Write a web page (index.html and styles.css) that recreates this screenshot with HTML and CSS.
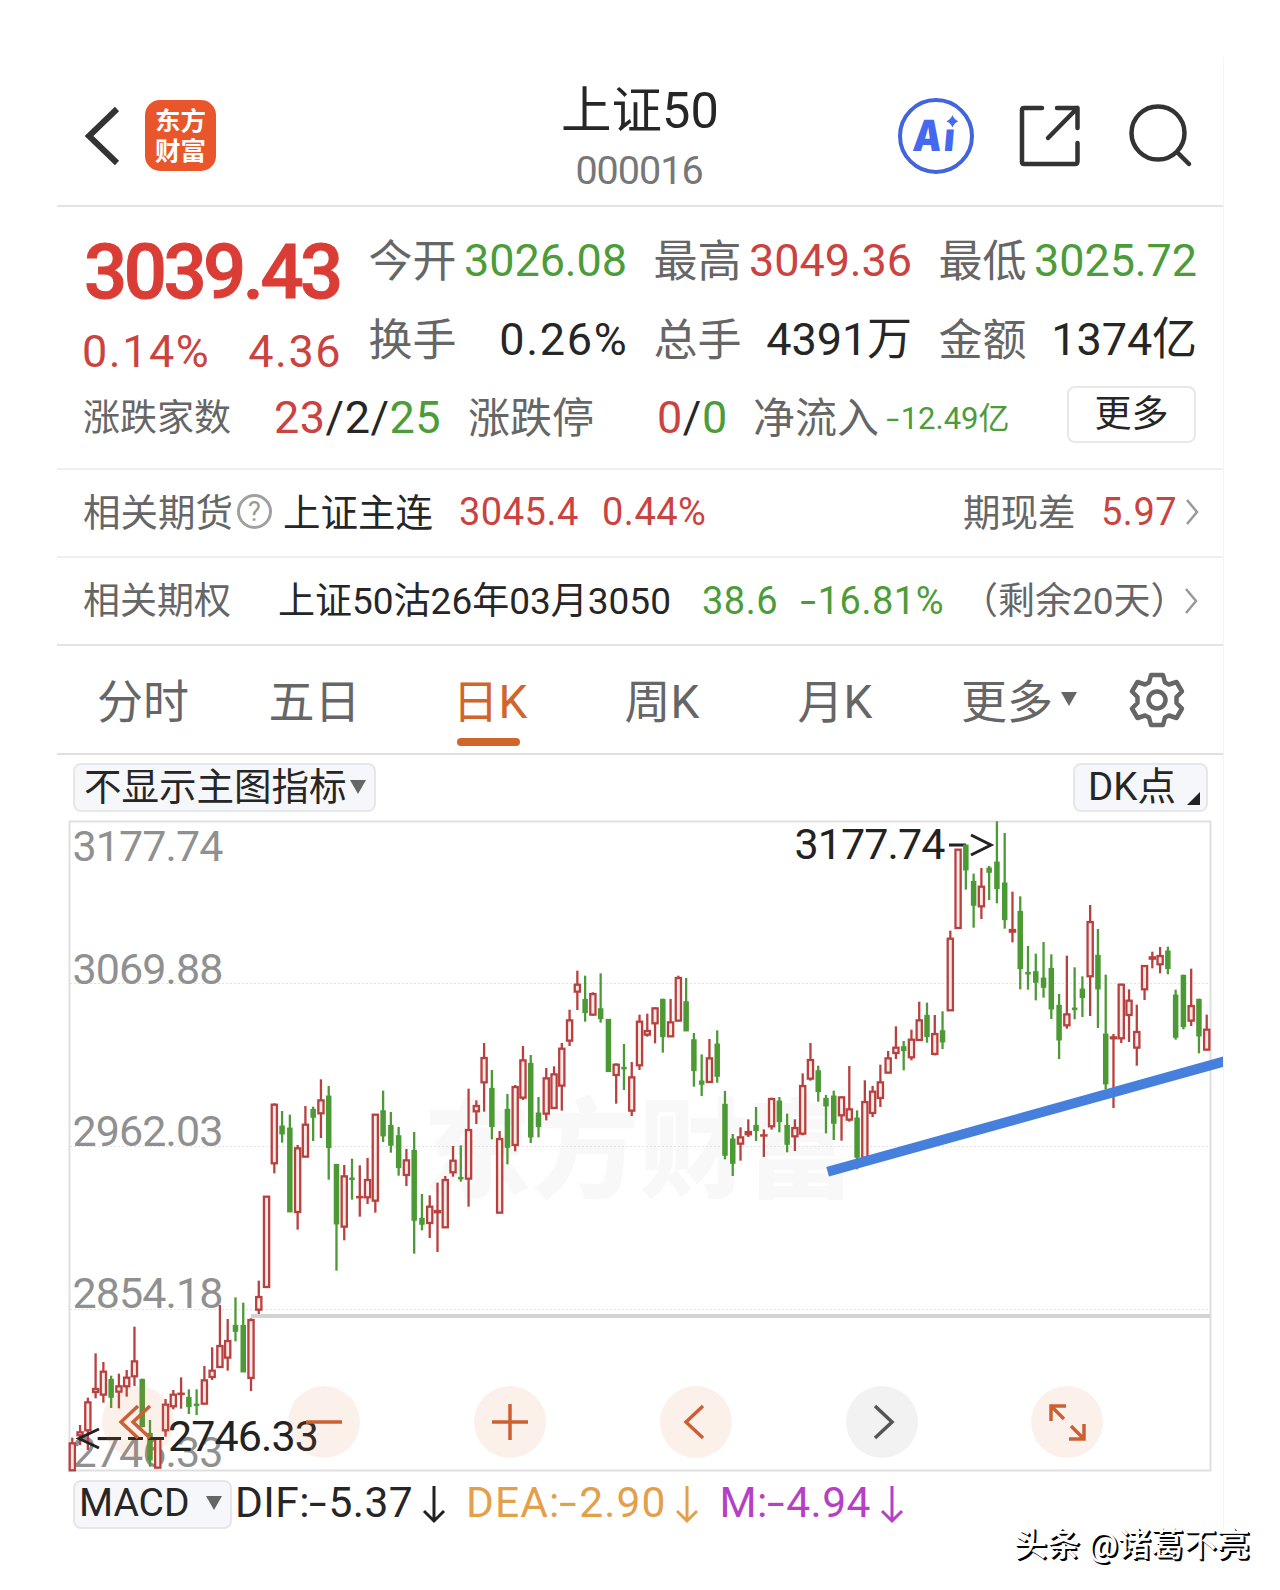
FILE: index.html
```html
<!DOCTYPE html>
<html lang="zh-CN">
<head>
<meta charset="utf-8">
<title>上证50 000016</title>
<link rel="stylesheet" href="styles.css">
</head>
<body>
<main class="app">
  <header class="topbar">
    <div class="topbar-left">
      <svg class="back" width="36" height="64" viewBox="0 0 36 64"><path d="M33 5 5 32 33 59" fill="none" stroke="#333" stroke-width="6"/></svg>
      <div class="logo"><span>东方</span><span>财富</span></div>
    </div>
    <div class="title">
      <h1>上证50</h1>
      <p>000016</p>
    </div>
    <div class="topbar-right">
      <svg width="78" height="78" viewBox="0 0 78 78">
        <clipPath id="below-dot"><path d="M0 0H45V32.500H78V78H0Z"/></clipPath>
        <circle cx="39" cy="39" r="36" fill="none" stroke="#4365dc" stroke-width="4"/>
        <g clip-path="url(#below-dot)"><text class="ai" transform="translate(15 53.500) skewX(-5) scale(.84 1)"><tspan x="0">A</tspan><tspan x="37">i</tspan></text></g>
        <path d="M55.400 18 Q57 22.500 61.500 24.300 Q57 26 55.400 30.500 Q54 26 49.300 24.300 Q54 22.500 55.400 18Z" fill="#4468ee"/>
      </svg>
      <svg class="share" width="64" height="64" viewBox="0 0 64 64" fill="none" stroke="#333" stroke-width="4.500" stroke-linecap="round" stroke-linejoin="round"><path d="M24 4H6Q4 4 4 6V58Q4 60 6 60H57Q59.500 60 59.500 57V39M39 4H59.500V24M59.500 4 30 34"/></svg>
      <svg class="search" width="68" height="68" viewBox="0 0 68 68" fill="none" stroke="#333" stroke-width="4.500" stroke-linecap="round"><circle cx="31" cy="31" r="26.500"/><path d="M50 50 62 62"/></svg>
    </div>
  </header>

  <section class="quote">
    <div class="quote-main">
      <div class="price">
        <strong>3039.43</strong>
        <div class="change"><span>0.14%</span><span>4.36</span></div>
      </div>
      <dl class="stats">
        <div><dt>今开</dt><dd class="down">3026.08</dd></div>
        <div><dt>最高</dt><dd class="up">3049.36</dd></div>
        <div><dt>最低</dt><dd class="down">3025.72</dd></div>
        <div><dt>换手</dt><dd class="turnover">0.26%</dd></div>
        <div><dt>总手</dt><dd>4391万</dd></div>
        <div><dt>金额</dt><dd>1374亿</dd></div>
      </dl>
    </div>
    <div class="breadth">
      <span class="label small">涨跌家数</span>
      <span class="num"><b class="up">23</b>/2/<b class="down">25</b></span>
      <span class="label">涨跌停</span>
      <span class="num"><b class="up">0</b>/<b class="down">0</b></span>
      <span class="label">净流入</span>
      <span class="flow down"><i class="minus">-</i>12.49亿</span>
      <button class="more">更多</button>
    </div>
  </section>

  <section class="related futures">
    <span class="label">相关期货</span>
    <span class="help">?</span>
    <span class="name">上证主连</span>
    <span class="up">3045.4</span>
    <span class="up">0.44%</span>
    <span class="label">期现差</span>
    <span class="up">5.97</span>
    <svg class="chev" width="14" height="28" viewBox="0 0 14 28"><path d="M2 2 12 14 2 26" fill="none" stroke="#999" stroke-width="2.500"/></svg>
  </section>
  <section class="related options">
    <span class="label">相关期权</span>
    <span class="name">上证50沽26年03月3050</span>
    <span class="down">38.6</span>
    <span class="down"><i class="minus">-</i>16.81%</span>
    <span class="label days">（剩余20天）</span>
    <svg class="chev" width="14" height="28" viewBox="0 0 14 28"><path d="M2 2 12 14 2 26" fill="none" stroke="#999" stroke-width="2.500"/></svg>
  </section>

  <nav class="tabs">
    <span>分时</span><span>五日</span><span class="active">日K</span><span>周K</span><span>月K</span>
    <span class="tab-more">更多<i class="tri"></i></span>
    <svg width="56" height="56" viewBox="-28 -28 56 56" fill="none" stroke="#666" stroke-width="4.500" stroke-linejoin="round"><path d="M-6-25H6L8-17.500 12-15.500 19.500-18 25-8.500 19.500-3V3L25 8.500 19.500 18 12 15.500 8 17.500 6 25H-6L-8 17.500-12 15.500-19.500 18-25 8.500-19.500 3V-3L-25-8.500-19.500-18-12-15.500-8-17.500Z"/><circle r="8.500"/></svg>
  </nav>

  <div class="indicator">
    <button class="chip">不显示主图指标<i class="tri"></i></button>
    <button class="chip dk">DK点<i class="corner"></i></button>
  </div>

  <section class="chart">
    <svg id="kline" width="1166" height="660" viewBox="57 816 1166 660">
      <text class="brand" x="423" y="1189">东方财富</text>
      <g class="grid"><path d="M70 983.500H1210M70 1146.500H1210M70 1309.500H1210"/></g>
      <rect class="frame" x="69.500" y="821.500" width="1141" height="649"/>
      <path class="ref-line" d="M251 1316H1210"/>
      <g class="axis">
        <text x="72.500" y="861">3177.74</text>
        <text x="72.500" y="984">3069.88</text>
        <text x="72.500" y="1146">2962.03</text>
        <text x="72.500" y="1308">2854.18</text>
        <text x="72.500" y="1467">2746.33</text>
      </g>
      <g class="mark">
        <text x="794.500" y="859">3177.74</text>
        <path d="M949 845H966M971 835 991 845 971 855"/>
      </g>
      <g id="candles"></g>
      <g class="mark">
        <text x="168" y="1451">2746.33</text>
        <path d="M99 1429 79 1438.500 99 1448M98 1438.500H121M128 1438.500H143M148 1438.500H164"/>
      </g>
      <path class="trend" d="M827.600 1171.800 1228 1060.400"/>
    </svg>
    <div class="controls">
      <span><svg viewBox="-36 -36 72 72"><path d="M0-16-17 0 0 16M12-16-5 0 12 16"/></svg></span>
      <span><svg viewBox="-36 -36 72 72"><path d="M-18 0H18"/></svg></span>
      <span><svg viewBox="-36 -36 72 72"><path d="M-18 0H18M0-18V18"/></svg></span>
      <span><svg viewBox="-36 -36 72 72"><path d="M7-16-10 0 7 16"/></svg></span>
      <span class="off"><svg viewBox="-36 -36 72 72"><path d="M-7-16 10 0-7 16"/></svg></span>
      <span><svg viewBox="-36 -36 72 72"><path d="M-16-1V-16H-1M-16-16-3-3M17 2V17H2M17 17 4 4"/></svg></span>
    </div>
  </section>

  <footer class="macd">
    <button class="chip">MACD<i class="tri"></i></button>
    <span>DIF:<i class="minus">-</i>5.37</span><svg width="24" height="40" viewBox="0 0 24 40"><path d="M12 2V37M2 27 12 37 22 27"/></svg>
    <span class="dea">DEA:<i class="minus">-</i>2.90</span><svg class="dea" width="24" height="40" viewBox="0 0 24 40"><path d="M12 2V37M2 27 12 37 22 27"/></svg>
    <span class="m">M:<i class="minus">-</i>4.94</span><svg class="m" width="24" height="40" viewBox="0 0 24 40"><path d="M12 2V37M2 27 12 37 22 27"/></svg>
  </footer>
</main>
<p class="credit">头条 @诸葛不亮</p>
<script src="chart.js"></script>
</body>
</html>
```
FILE: styles.css
```css
* { box-sizing: border-box; margin: 0; padding: 0; }
body {
  width: 1280px;
  height: 1590px;
  padding-top: 57px;
  overflow: hidden;
  background: #fff;
  color: #262626;
  font-family: Roboto, "Noto Sans CJK SC", sans-serif;
}
i { font-style: normal; }
b { font-weight: 400; }
button { font: inherit; color: inherit; background: none; }
svg { display: block; flex: none; }
.app { width: 1167px; height: 1472px; margin-left: 57px; border-right: 1px solid #f4f4f4; white-space: nowrap; }
.up { color: #cb4340; }
.down { color: #4c9c39; }
.label { color: #666; }
.minus { display: inline-block; width: .44em; transform: scaleX(1.5); transform-origin: 10% 50%; }
.tri { display: inline-block; border: 8px solid transparent; border-top: 14px solid #666; border-bottom: 0; }

.topbar { display: grid; grid-template-columns: 400px 366px 400px; height: 150px; border-bottom: 2px solid #e3e3e3; }
.topbar-left { display: flex; align-items: center; padding: 9px 0 0 27px; }
.logo {
  display: flex; flex-direction: column; align-items: center; justify-content: center;
  width: 71px; height: 71px; margin-left: 25px; border-radius: 15px;
  background: #e9562b; color: #fff; font-weight: 700; font-size: 25.500px; line-height: 30px;
}
.title { text-align: center; padding-top: 24px; }
.title h1 { font-size: 50.500px; font-weight: 400; line-height: 60px; }
.title p { font-size: 39.500px; line-height: 60px; letter-spacing: -1px; color: #777; padding-right: 2px; }
.topbar-right { display: flex; align-items: center; padding: 9px 0 0 74px; }
.ai { font: 900 43px Inter, sans-serif; fill: #4468ee; }
.share { margin-left: 43px; }
.search { margin-left: 44.500px; }

.quote { height: 263px; border-bottom: 2px solid #f0f0f0; }
.quote-main { display: flex; height: 171px; padding: 13px 26px 0 27px; }
.price { width: 285px; color: #d93d35; }
.price strong { display: block; font-size: 76px; line-height: 104px; font-weight: 500; letter-spacing: -3.500px; -webkit-text-stroke: 1px #d93d35; }
.change { display: flex; justify-content: space-between; width: 260px; margin-left: -2px; line-height: 56px; font-size: 45px; letter-spacing: 1.500px; color: #cb4340; }
.stats { display: grid; grid-template-columns: repeat(3, 258.500px); grid-auto-rows: 78.500px; column-gap: 26.500px; font-size: 45px; line-height: 80px; }
.stats div { display: flex; justify-content: space-between; }
.stats dt { color: #666; font-size: 44px; padding-top: 2px; }
.stats dd { letter-spacing: -.1px; padding-top: 1px; }
.stats .turnover { letter-spacing: 1.700px; margin-right: -1.500px; }
.breadth { display: grid; grid-template-columns: 191px 194px 189px 96px 134px 180px 129px; align-items: center; height: 76px; padding: 2px 0 0 26px; font-size: 45px; }
.breadth .label { font-size: 42px; margin-top: -5px; }
.breadth .label.small { font-size: 37px; }
.breadth .num { letter-spacing: .5px; }
.flow { font-size: 31px; margin-top: -3px; }
.more { height: 57px; margin-top: -5px; border: 2px solid #e8e8e8; border-radius: 8px; font-size: 37px; line-height: 52px; }

.related { display: grid; align-items: center; height: 88px; padding-left: 26px; font-size: 37.500px; border-bottom: 2px solid #f0f0f0; }
.related .up, .related .down { letter-spacing: .5px; }
.related .label, .related .name { margin-top: -5px; }
.futures { grid-template-columns: 154px 46px 176px 143px 361px 138px 84px 14px; padding-bottom: 3px; }
.futures .up { font-size: 38px; }
.options { grid-template-columns: 195px 424px 99px 160px 223px 14px; font-size: 37px; border-color: #e3e3e3; padding-bottom: 1px; }
.options .down { font-size: 38px; }
.help { width: 35px; height: 35px; border: 3px solid #a0a0a0; border-radius: 50%; color: #999; font-size: 27px; line-height: 30px; text-align: center; }

.tabs { display: grid; grid-template-columns: 172px 171px 180px 164px 182px 203px 56px; align-items: center; height: 109px; border-bottom: 2px solid #e0e0e0; color: #666; font-size: 46px; text-align: center; }
.tabs span { margin-top: -4px; }
.tabs .active { position: relative; color: #d0662c; }
.tabs .active::after { content: ""; position: absolute; left: 57px; top: 73px; width: 63px; height: 8px; border-radius: 4px; background: #d0662c; }
.tabs .tab-more { display: flex; align-items: center; padding-left: 35px; }
.tab-more .tri { margin-left: 8px; margin-top: 3px; }

.indicator { display: flex; justify-content: space-between; height: 61px; padding: 8px 15px 0 16px; }
.chip { display: flex; align-items: center; height: 49px; padding: 0 8px 1px 9px; border: 2px solid #e6e7ea; border-radius: 8px; background: #f6f7fa; font-size: 37.500px; line-height: 44px; }
.chip .tri { margin-left: 3px; }
.chip.dk { position: relative; width: 135px; padding-left: 13px; font-size: 38.500px; }
.corner { position: absolute; right: 6px; bottom: 5px; border-left: 13px solid transparent; border-bottom: 13px solid #222; }

.chart { position: relative; height: 660px; }
.brand { font: 900 108px "Noto Sans CJK SC", sans-serif; fill: #f8f8f8; }
.grid { stroke: #e2e2e2; stroke-dasharray: 2 2; }
.frame { fill: none; stroke: #dfdfe1; stroke-width: 2; }
.ref-line { stroke: #d3d3d3; stroke-width: 4; }
.axis, .mark { font-size: 43px; letter-spacing: -.9px; fill: #909090; }
.mark { fill: #222; }
.mark path { fill: none; stroke: #222; stroke-width: 3; }
.trend { stroke: #4680dc; stroke-width: 10; }
.rise { stroke: #b8403f; fill: #fcebe8; stroke-width: 2.300; }
.fall { stroke: #4c9a35; fill: #4c9a35; stroke-width: 2.300; }
.controls { position: absolute; left: 45px; top: 570px; display: flex; gap: 113.900px; }
.controls span { width: 72px; height: 72px; border-radius: 50%; background: rgba(232, 120, 70, .11); }
.controls path { fill: none; stroke: #cc6035; stroke-width: 3.500; }
.controls .off { background: #f2f2f2; }
.controls .off path { stroke: #555; }

.macd { display: flex; align-items: center; padding: 4px 0 0 16px; font-size: 42.500px; letter-spacing: .4px; }
.macd .chip { width: 159px; padding: 0 8px 4px 4px; font-size: 39px; justify-content: space-between; }
.macd > span { margin: -4px 0 0 3px; }
.macd > svg { margin: -2px 17px 0 9px; fill: none; stroke: #222; stroke-width: 3; }
.macd .dea { color: #e3a04b; stroke: #e3a04b; letter-spacing: 1.100px; }
.macd .m { color: #b63fc6; stroke: #b63fc6; }

.credit { margin: -2px 0 0 1014px; font-size: 33px; line-height: 36px; white-space: nowrap; color: #fff; font-weight: 500; text-shadow: 1px 1px 0 #000, 2px 2px 0 #000; }
```
FILE: chart.js
```js
// Daily candles, left to right: [direction, high, body top, body bottom, low],
// measured in thirds of a pixel below the group's top.
const groups = [
  { top: 1050, rows: `R 1163 1178 1263 1263;R 1125 1145 1158 1185;R 1043 1055 1143 1200;R 910 1015 1028 1045;R 936 963 1036 1058;G 977 988 1042 1074;R 971 1007 1027 1075;R 960 981 1011 1040;R 830 932 981 1008;G 986 988 1130 1132;G 1110 1150 1230 1250;R 1163 1163 1255 1255;R 1047 1062 1143 1160;R 1020 1032 1071 1078;R 982 1029 1034 1076;G 1018 1042 1070 1092;G 1018 1062 1066 1095;R 948 989 1063 1063;R 892 960 983 990;R 765 886 953 953;R 807 871 925 962;G 742 826 844 874;G 758 826 966 966;R 805 808 986 1023;R 692 739 781 792;R 438 438 713 713;R 160 162 342 370;G 183 228 252 278;G 194 234 486 486;R 285 293 488 539;R 168 222 322 322;G 170 178 202 273;R 88 149 192 264;G 108 138 293 389;G 343 343 522 662;R 345 377 532 571;G 326 384 388 449` },
  { top: 940, rows: `R 676 769 773 830;R 654 718 774 792;R 522 522 784 818;G 452 512 588 606;G 516 556 616 638;G 561 587 683 707;R 627 659 707 738;G 576 631 841 941;G 762 835 853 871;R 766 798 851 894;R 728 811 819 936;R 708 718 864 864;R 618 660 699 710;G 616 712 716 725;R 446 568 718 800;R 481 496 516 552;R 309 352 429 515;G 390 445 560 598;R 573 595 820 820;G 462 508 622 673;R 435 439 617 634;R 318 359 475 480;G 345 370 591 609;G 471 519 560 592;R 384 413 523 541;R 379 401 506 506;R 309 324 439 512;R 209 239 304 318;R 92 132 157 210;G 107 178 218 245;R 157 160 226 227;G 100 206 236 248;G 238 238 395 395;R 370 372 407 491;G 312 382 386 450;R 366 410 514 528;R 224 243 378 390;R 221 271 286 290;R 202 203 252 310;G 176 178 290 338;R 177 245 291 291;R 107 112 244 244;G 114 185 273 273;G 279 299 392 440;G 343 423 433 468;R 297 353 428 428;G 271 312 409 428;G 453 493 646 658;G 582 597 670 708;R 562 590 613 662;R 538 574 585 591;G 501 556 572 603;R 568 584 588 651;R 473 475 561 569;G 471 483 545 577;G 521 556 613 637;R 538 562 591 633;R 400 436 583 586;R 309 358 418 422;G 377 392 455 485;G 465 475 498 580;G 452 468 550 600;R 469 470 528 602;R 378 506 541 545;G 511 534 652 688;R 421 484 655 655;R 438 453 521 531;R 374 425 476 501;R 333 353 400 400;R 259 321 341 357;G 303 320 332 391;R 269 297 354 361` },
  { top: 810, rows: `R 575 629 692 692;G 578 616 680 698;R 615 670 734 736;G 604 662 696 717;R 362 384 603 603;R 117 117 356 356;G 104 105 180 239;G 191 214 286 353;R 174 228 291 327;G 168 174 187 270;G 34 156 236 280;G 69 219 329 356;R 245 358 367 397;G 259 304 476 538;G 408 487 492 539;G 431 485 517 571;G 396 504 532 563;G 433 475 597 627;G 552 586 690 747;R 437 611 648 656;G 472 594 599 628;G 499 537 563 621;R 285 334 501 618;G 357 436 537 654;G 494 672 822 838;R 672 680 687 894;R 521 522 687 699;R 538 570 617 696;R 584 664 715 767;R 465 466 540 570;R 425 440 448 475;R 411 436 465 490;G 410 423 476 493;G 539 555 682 689;G 494 496 650 658;R 476 586 634 648;G 566 568 678 730;R 614 657 721 721` }
];
let i = 0;
let out = "";
for (const group of groups) {
  for (const row of group.rows.split(";")) {
    const [dir, ...v] = row.split(" ");
    const [high, bodyTop, bodyBottom, low] = v.map(n => group.top + n / 3);
    const x = 72.3 + 7.77 * i++;
    const half = dir === "R" ? 2.6 : 1.6;
    const h = Math.max(0.2, bodyBottom - bodyTop - 1.4);
    out += `<g class="${dir === "R" ? "rise" : "fall"}"><path d="M${x} ${high}V${low}"/><rect x="${x - half}" y="${bodyTop + 0.7}" width="${half * 2}" height="${h}"/></g>`;
  }
}
document.getElementById("candles").innerHTML = out;
```
